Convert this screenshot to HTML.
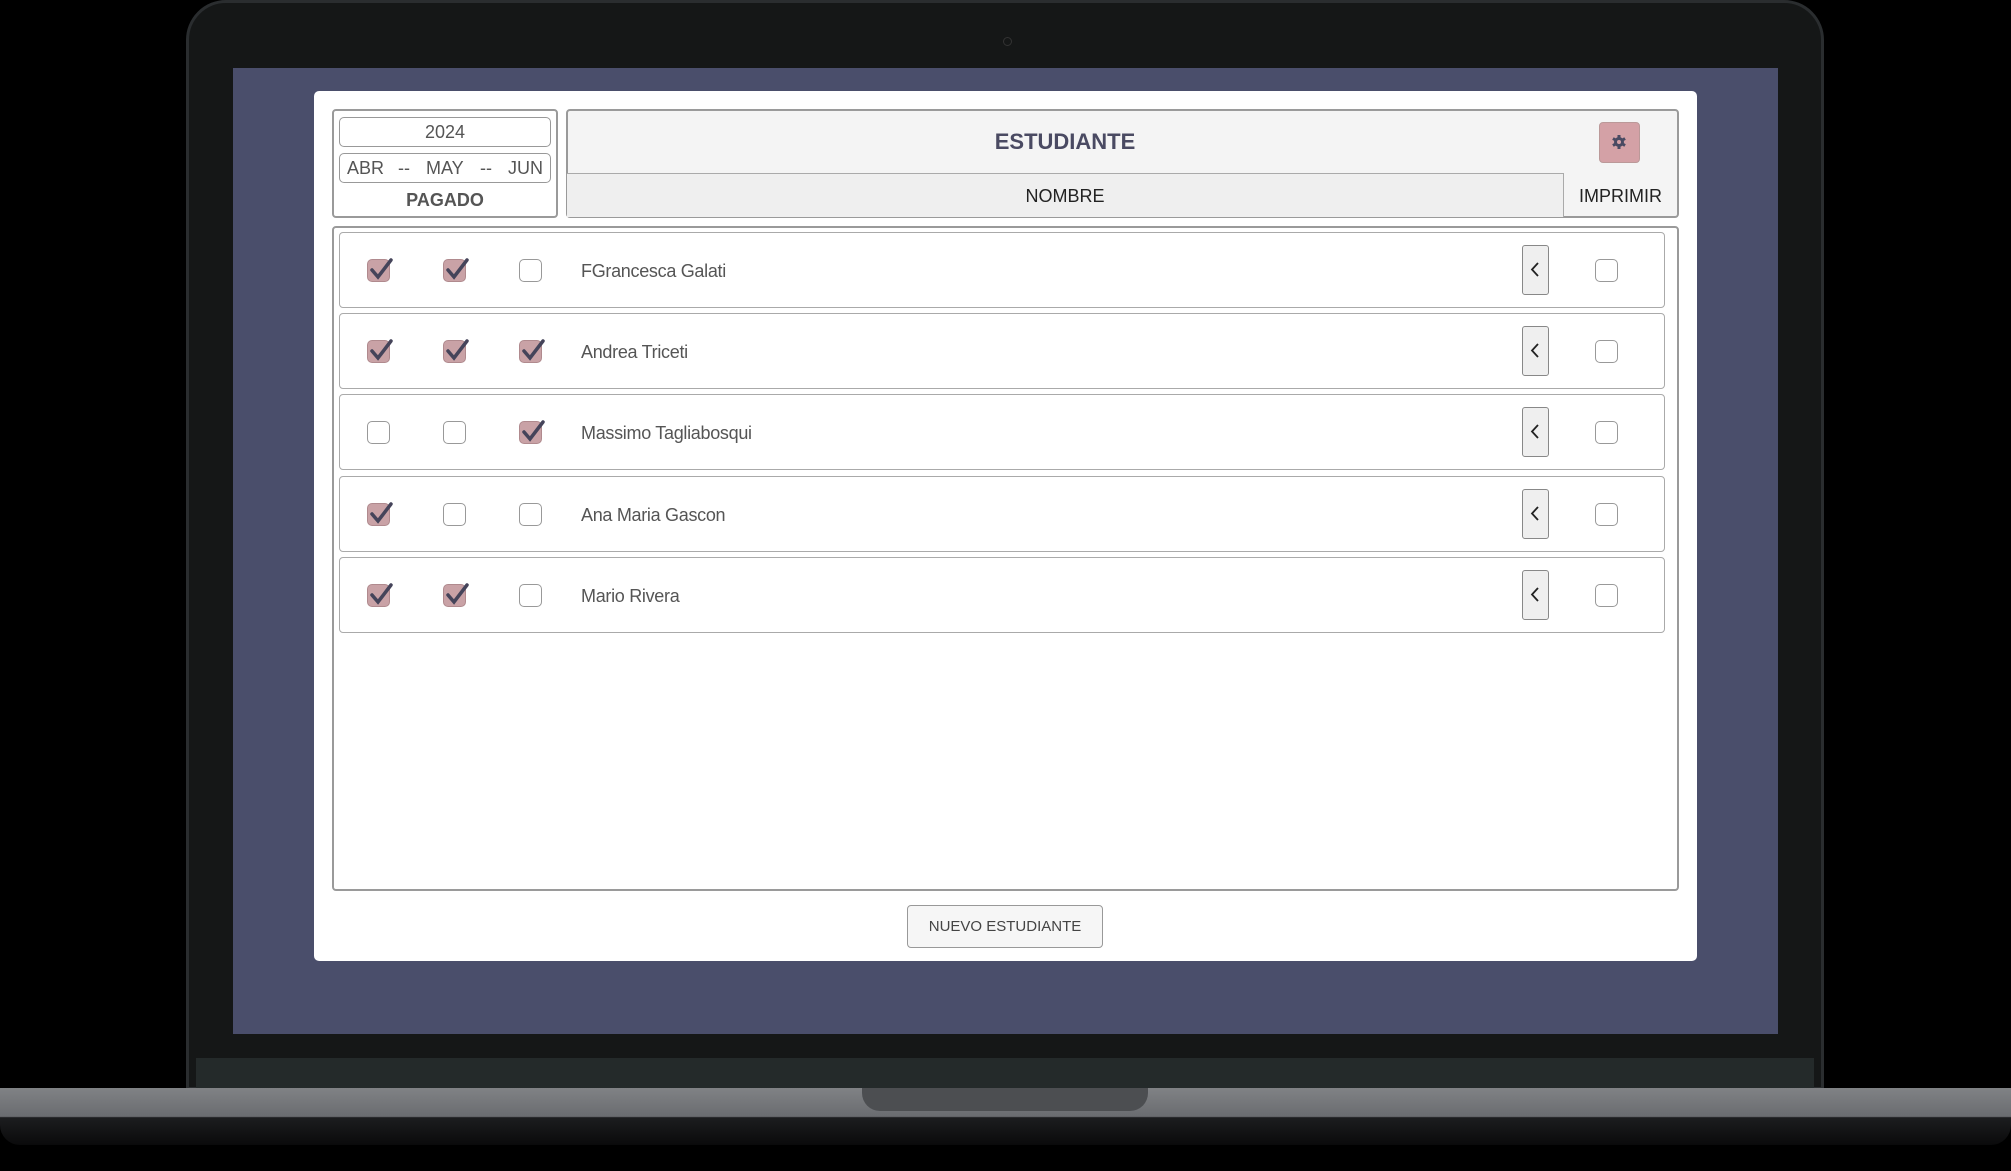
<!DOCTYPE html>
<html><head><meta charset="utf-8"><style>
*{box-sizing:border-box;margin:0;padding:0}
body{width:2011px;height:1171px;background:#000;position:relative;overflow:hidden;font-family:"Liberation Sans",sans-serif;color:#4a4a5a}
.abs{position:absolute}
.lap{left:186px;top:0;width:1638px;height:1090px;background:#151717;border-radius:40px 40px 0 0;border:3px solid #2a2d2f}
.chin{left:196px;top:1058px;width:1618px;height:32px;background:#242a2a}
.screen{left:233px;top:68px;width:1545px;height:966px;background:#4a4e6b}
.base{left:0;top:1088px;width:2011px;height:57px;background:linear-gradient(#808285 0,#6a6c70 50%,#1c1d1f 52%,#0a0a0b 100%);border-radius:0 0 20px 20px}
.notch{left:862px;top:1088px;width:286px;height:23px;background:#4c4e51;border-radius:0 0 18px 18px}
.panel{left:314px;top:91px;width:1383px;height:870px;background:#fff;border-radius:5px}
.box{border:2px solid #9a9a9a;border-radius:4px}
.cb{position:absolute;width:23px;height:23px;border:1.5px solid #999;border-radius:5px;background:#fff}
.cb.on{background:#c9a2a6;border-color:#b08a8e}
.cb.on svg{position:absolute;left:-2px;top:-7px}
.row{position:absolute;left:339px;width:1326px;height:76px;border:1.5px solid #aaa;border-radius:4px;background:#fff}
.name{position:absolute;left:241px;top:28px;font-size:18px;letter-spacing:-0.3px;color:#555}
</style></head><body>
<div class="abs lap"></div>
<div class="abs chin"></div>
<div class="abs screen"></div>
<div class="abs base"></div>
<div class="abs notch"></div>
<div class="abs" style="left:1003px;top:37px;width:9px;height:9px;border-radius:50%;border:1px solid #333"></div>
<div class="abs panel"></div>

<div class="abs box" style="left:332px;top:109px;width:226px;height:109px"></div>
<div class="abs" style="left:339px;top:117px;width:212px;height:30px;border:1.5px solid #999;border-radius:5px;text-align:center;font-size:18px;line-height:28px;color:#555">2024</div>
<div class="abs" style="left:339px;top:153px;width:212px;height:30px;border:1.5px solid #999;border-radius:5px;font-size:18px;line-height:28px;color:#555">
<span class="abs" style="left:7px">ABR</span><span class="abs" style="left:58px">--</span><span class="abs" style="left:86px">MAY</span><span class="abs" style="left:140px">--</span><span class="abs" style="left:168px">JUN</span></div>
<div class="abs" style="left:332px;top:190px;width:226px;text-align:center;font-size:18px;font-weight:bold;color:#555">PAGADO</div>

<div class="abs box" style="left:566px;top:109px;width:1113px;height:109px;background:#f4f4f4"></div>
<div class="abs" style="left:566px;top:129px;width:998px;text-align:center;font-size:22px;font-weight:bold;color:#4a4a62">ESTUDIANTE</div>
<div class="abs" style="left:1599px;top:122px;width:41px;height:41px;background:#d4a1a6;border:1.5px solid #b99;border-radius:4px">
<svg width="38" height="38" viewBox="0 0 38 38" style="position:absolute;left:0;top:0"><g fill="#4a4a62" transform="translate(19 19)"><circle r="5"/><rect x="-1.5" y="-7" width="3" height="14"/><rect x="-1.5" y="-7" width="3" height="14" transform="rotate(60)"/><rect x="-1.5" y="-7" width="3" height="14" transform="rotate(120)"/></g><circle cx="19" cy="19" r="2" fill="#d4a1a6"/></svg></div>
<div class="abs" style="left:567px;top:173px;width:997px;height:44px;background:#efefef;border-top:1.5px solid #aaa;border-right:1.5px solid #aaa;text-align:center;font-size:18px;line-height:44px;color:#222">NOMBRE</div>
<div class="abs" style="left:1564px;top:174px;width:113px;height:44px;text-align:center;font-size:18px;line-height:44px;color:#222">IMPRIMIR</div>

<div class="abs box" style="left:332px;top:226px;width:1347px;height:665px"></div>

<div class="row" style="top:232px"><div class="name">FGrancesca Galati</div></div>
<div class="row" style="top:313px"><div class="name">Andrea Triceti</div></div>
<div class="row" style="top:394px"><div class="name">Massimo Tagliabosqui</div></div>
<div class="row" style="top:476px"><div class="name">Ana Maria Gascon</div></div>
<div class="row" style="top:557px"><div class="name">Mario Rivera</div></div>

<div id="cbs"></div>
<div class="abs" style="left:907px;top:905px;width:196px;height:43px;border:1.5px solid #999;border-radius:4px;background:#f6f6f6;text-align:center;font-size:15px;line-height:41px;color:#444">NUEVO ESTUDIANTE</div>

<script>
var st=[[1,1,0],[1,1,1],[0,0,1],[1,0,0],[1,1,0]];
var tops=[232,313,394,476,557];
var xs=[367,443,519];
var h='';
var chk='<svg width="30" height="30" viewBox="0 0 30 30"><path d="M6 17 L12 24 L25 7" stroke="#45445a" stroke-width="3.5" fill="none" stroke-linecap="round"/></svg>';
for(var i=0;i<5;i++){
 var cy=tops[i]+38-11;
 for(var j=0;j<3;j++){
  h+='<div class="cb'+(st[i][j]?' on':'')+'" style="left:'+xs[j]+'px;top:'+cy+'px">'+(st[i][j]?chk:'')+'</div>';
 }
 h+='<div class="cb" style="left:1595px;top:'+cy+'px"></div>';
 h+='<div class="abs" style="left:1522px;top:'+(tops[i]+13)+'px;width:27px;height:50px;background:#efefef;border:1.5px solid #888;border-radius:3px"><svg width="24" height="47" viewBox="0 0 24 47"><path d="M15 17 L9 23.5 L15 30" stroke="#222" stroke-width="1.8" fill="none"/></svg></div>';
}
document.getElementById('cbs').innerHTML=h;
</script>
</body></html>
